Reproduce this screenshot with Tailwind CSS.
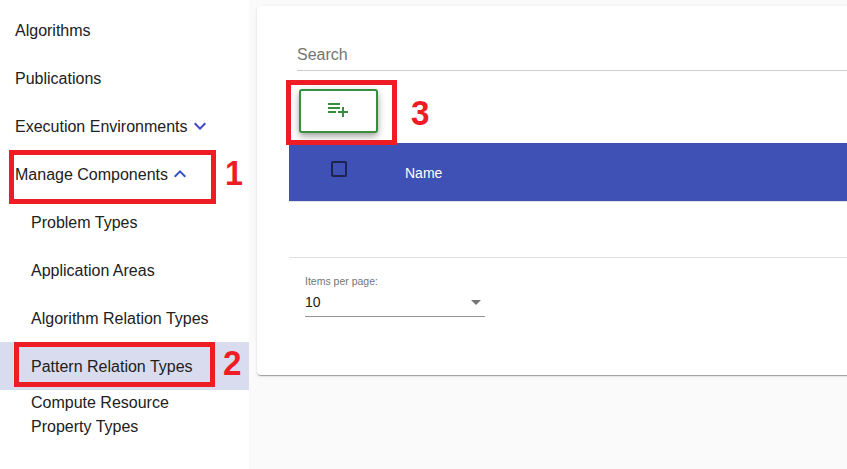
<!DOCTYPE html>
<html lang="en">
<head>
<meta charset="utf-8">
<title>Pattern Relation Types</title>
<script src="https://cdn.jsdelivr.net/npm/@tailwindcss/browser@4"></script>
</head>
<body class="relative flex h-[469px] w-[847px] overflow-hidden bg-[#fafafa] font-['Liberation_Sans',Arial,sans-serif] text-base text-[#212121]">
  <nav class="flex h-full w-[249px] shrink-0 flex-col bg-white pt-1.5 leading-6">
    <a class="flex h-12 items-center pl-[15px] pt-0.5">Algorithms</a>
    <a class="flex h-12 items-center pl-[15px] pt-0.5">Publications</a>
    <a class="flex h-12 items-center pl-[15px] pt-0.5">Execution Environments
      <svg class="-mt-0.5 size-6" viewBox="0 0 24 24" fill="#4048c4"><path d="M16.59 8.59L12 13.17 7.41 8.59 6 10l6 6 6-6z"/></svg></a>
    <a class="flex h-12 items-center pl-[15px] pt-0.5">Manage Components
      <svg class="-mt-0.5 size-6" viewBox="0 0 24 24" fill="#3353c4"><path d="M12 8l-6 6 1.41 1.41L12 10.83l4.59 4.58L18 14z"/></svg></a>
    <a class="flex h-12 items-center pl-[31px] pt-0.5">Problem Types</a>
    <a class="flex h-12 items-center pl-[31px] pt-0.5">Application Areas</a>
    <a class="flex h-12 items-center pl-[31px] pt-0.5">Algorithm Relation Types</a>
    <a class="flex h-12 items-center bg-[#d9dbef] pl-[31px] pt-0.5">Pattern Relation Types</a>
    <a class="flex h-12 items-center pl-[31px] pr-16 pt-0.5">Compute Resource Property Types</a>
  </nav>

  <main class="ml-2 mt-1.5 flex h-[369px] w-[620px] shrink-0 flex-col rounded bg-white pl-8 shadow-[0_2px_1px_-1px_rgba(0,0,0,0.2),0_1px_1px_0_rgba(0,0,0,0.14),0_1px_3px_0_rgba(0,0,0,0.12)]">
    <div class="ml-2 flex h-[65px] items-end border-b border-[#c8cdd0] pb-[3px] leading-6 text-[#757575]">Search</div>
    <div class="flex h-[72px] pl-2.5 pt-[18px]">
      <button class="flex h-11 w-[79px] justify-center rounded-[3px] border-2 border-[#388e3c] bg-white pt-1.5 shadow-[0_3px_5px_-1px_rgba(0,0,0,0.2),0_5px_8px_0_rgba(0,0,0,0.14),0_1px_10px_0_rgba(0,0,0,0.12)]">
        <svg class="-ml-px size-6" viewBox="0 0 24 24" fill="#388e3c" shape-rendering="crispEdges"><path d="M14 10H2v2h12v-2zm0-4H2v2h12V6zm4 8v-4h-2v4h-4v2h4v4h2v-4h4v-2h-4zM2 16h8v-2H2v2z"/></svg>
      </button>
    </div>
    <div class="flex h-[59px] border-b border-[#e0e0e0] bg-[#3f51b5] pl-[42px] text-sm text-white">
      <span class="mt-[18px] size-4 rounded-[2px] border-2 border-[#1c2451]"></span>
      <span class="ml-[58px] mt-5 leading-5">Name</span>
    </div>
    <div class="h-14 border-b border-[#e0e0e0]"></div>
    <div class="ml-4 mt-[17px] flex h-[42px] w-[180px] flex-col border-b border-[#949494]">
      <span class="-mt-px text-[10.5px] leading-[14px] text-[#757575]">Items per page:</span>
      <div class="mt-1 flex items-center justify-between pr-1 text-sm leading-5">
        <span>10</span>
        <svg class="h-[5px] w-2.5" viewBox="0 0 10 5" fill="#757575"><path d="M0 0h10L5 5z"/></svg>
      </div>
    </div>
  </main>

  <!-- Numbered step callouts -->
  <div class="absolute left-[9px] top-[150px] h-[54px] w-[207px] border-5 border-[#ee1c24]"></div>
  <div class="absolute left-[225px] top-[153px] text-[35px] font-bold leading-10 text-[#ee1c24]"><span class="inline-block origin-left scale-x-[0.92]">1</span></div>
  <div class="absolute left-[14px] top-[342px] h-[45px] w-[201px] border-5 border-[#ee1c24]"></div>
  <div class="absolute left-[223px] top-[343px] text-[35px] font-bold leading-10 text-[#ee1c24]"><span class="inline-block origin-left scale-x-[0.95]">2</span></div>
  <div class="absolute left-[286px] top-[80px] h-[65px] w-[111px] border-5 border-[#ee1c24]"></div>
  <div class="absolute left-[410.5px] top-[93px] text-[35px] font-bold leading-10 text-[#ee1c24]"><span class="inline-block origin-left scale-x-[0.95]">3</span></div>
</body>
</html>
